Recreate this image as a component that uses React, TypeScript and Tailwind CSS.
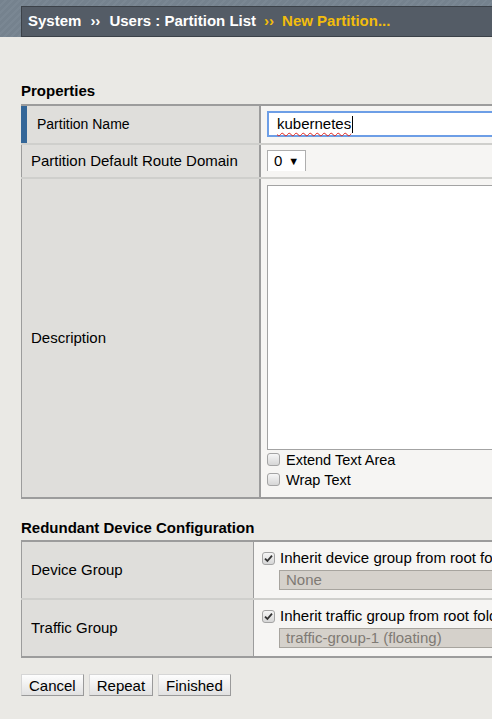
import React from 'react'

function Box({ checked }: { checked?: boolean }) {
  return (
    <span className="inline-flex h-[13px] w-[13px] shrink-0 items-center justify-center rounded-[3px] border border-[#a4a4a4] bg-gradient-to-b from-[#f6f6f6] to-[#d6d6d6]">
      {checked && (
        <svg width="9" height="9" viewBox="0 0 9 9">
          <path d="M1 4.6 L3.4 7 L8 1.6" fill="none" stroke="#333" strokeWidth="1.8" />
        </svg>
      )}
    </span>
  )
}

function Btn({ children }: { children: React.ReactNode }) {
  return (
    <button className="h-[22px] px-[7px] border border-[#d6d6d6] border-r-[#9a9a9a] border-b-[#9a9a9a] bg-gradient-to-b from-[#fefefe] to-[#e1e1e1] text-[15px] leading-none text-black">
      {children}
    </button>
  )
}

export default function App() {
  return (
    <div className="min-h-screen w-full overflow-hidden bg-[#eae9e5] font-['Liberation_Sans',Arial,sans-serif] text-[15px] text-black">
      {/* breadcrumb */}
      <div className="h-[37px] pl-[21px] pt-[6px] bg-[repeating-linear-gradient(135deg,#75828e_0px,#75828e_3px,#7a8793_3px,#7a8793_5px)]">
        <div className="flex h-[31px] items-center border border-r-0 border-[#3b4148] bg-[#545c66] pl-[6px] text-[15px] font-bold whitespace-nowrap text-white">
          <span>System</span>
          <span className="mx-[9px]">››</span>
          <span>Users : Partition List</span>
          <span className="mx-[8px] text-[#f2bd0c]">››</span>
          <span className="text-[#f2bd0c]">New Partition...</span>
        </div>
      </div>

      <div className="pl-[21px]">
        <h2 className="mt-[45px] mb-[4px] h-[18px] text-[15px] leading-[18px] font-bold">Properties</h2>

        {/* properties table */}
        <div className="border-t-2 border-b-2 border-[#9c9c9c]">
          <div className="flex border-b-2 border-[#cfcfcc]">
            <div className="flex h-[37px] w-[240px] shrink-0 items-center border-r-2 border-[#9c9c9c] bg-[#dfdedb]">
              <span className="h-full w-[6px] bg-[#336698]" />
              <span className="pl-[10px] text-[14px]">Partition Name</span>
            </div>
            <div className="flex-1 bg-[#f6f5f3] pl-[6px] pt-[5px]">
              <div className="flex h-[26px] items-center border-2 border-r-0 border-[#6d9ee6] bg-white pl-[8px] text-[15px]">
                <span className="underline decoration-wavy decoration-[#e2231a] decoration-1 underline-offset-[3px]">kubernetes</span>
                <span className="ml-[1px] inline-block h-[17px] w-px bg-black" />
              </div>
            </div>
          </div>

          <div className="flex border-b-2 border-[#cfcfcc]">
            <div className="flex h-[32px] w-[240px] shrink-0 items-center border-r-2 border-l border-[#9c9c9c] bg-[#dfdedb] pl-[9px] text-[15px]">
              Partition Default Route Domain
            </div>
            <div className="flex-1 bg-[#f6f5f3] pl-[6px] pt-[5px]">
              <div className="flex h-[21px] w-[39px] items-center border border-b-0 border-[#aeaeae] bg-white pl-[6px] text-[15px]">
                0<span className="ml-[6px] text-[11px]">▼</span>
              </div>
            </div>
          </div>

          <div className="flex">
            <div className="flex h-[318px] w-[240px] shrink-0 items-center border-r-2 border-l border-[#9c9c9c] bg-[#dfdedb] pl-[9px] text-[15px]">
              Description
            </div>
            <div className="flex-1 bg-[#f6f5f3] pl-[6px] pt-[6px]">
              <div className="h-[265px] border border-r-0 border-[#a3a3a3] bg-white" />
              <div className="flex h-[20px] items-start gap-[6px] text-[14.5px]">
                <span className="mt-[1px]"><Box /></span>
                <span className="leading-[20px]">Extend Text Area</span>
              </div>
              <div className="flex h-[20px] items-start gap-[6px] text-[14.5px]">
                <span className="mt-[1px]"><Box /></span>
                <span className="leading-[20px]">Wrap Text</span>
              </div>
            </div>
          </div>
        </div>

        <h2 className="mt-[20px] mb-[3px] h-[18px] text-[15px] leading-[18px] font-bold">Redundant Device Configuration</h2>

        {/* redundancy table */}
        <div className="border-t-2 border-b-2 border-[#9c9c9c]">
          {[
            { label: 'Device Group', check: 'Inherit device group from root folder', value: 'None' },
            { label: 'Traffic Group', check: 'Inherit traffic group from root folder', value: 'traffic-group-1 (floating)' },
          ].map((r, i) => (
            <div key={r.label} className={`flex ${i === 0 ? 'border-b-2 border-[#cfcfcc]' : ''}`}>
              <div className="flex h-[56px] w-[233px] shrink-0 items-center border-l border-r border-[#9c9c9c] bg-[#dfdedb] pl-[9px] text-[15px]">
                {r.label}
              </div>
              <div className="flex-1 overflow-hidden bg-[#f6f5f3] pl-[8px] pt-[7px]">
                <div className="flex h-[18px] items-center gap-[5px] whitespace-nowrap text-[15px]">
                  <Box checked />
                  <span>{r.check}</span>
                </div>
                <div className="ml-[17px] mt-[3px] flex h-[20px] items-center border border-r-0 border-[#a7a49e] bg-[#d5d1cb] pl-[6px] text-[15px] whitespace-nowrap text-[#7f7a74]">
                  {r.value}
                </div>
              </div>
            </div>
          ))}
        </div>

        <div className="mt-[16px] flex gap-[5px]">
          <Btn>Cancel</Btn>
          <Btn>Repeat</Btn>
          <Btn>Finished</Btn>
        </div>
      </div>
    </div>
  )
}
